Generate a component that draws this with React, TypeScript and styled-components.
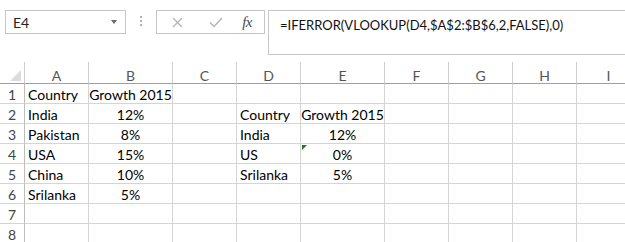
import styled, {createGlobalStyle} from "styled-components";

const COLUMNS = [
  {name: "A", width: 64, align: "left"},
  {name: "B", width: 84, align: "center"},
  {name: "C", width: 64, align: "left"},
  {name: "D", width: 64, align: "left"},
  {name: "E", width: 84, align: "center"},
  {name: "F", width: 64, align: "left"},
  {name: "G", width: 64, align: "left"},
  {name: "H", width: 64, align: "left"},
  {name: "I", width: 64, align: "left"},
];

const ROWS: string[][] = [
  ["Country", "Growth 2015", "", "", ""],
  ["India", "12%", "", "Country", "Growth 2015"],
  ["Pakistan", "8%", "", "India", "12%"],
  ["USA", "15%", "", "US", "0%"],
  ["China", "10%", "", "Srilanka", "5%"],
  ["Srilanka", "5%", "", "", ""],
  [],
  [],
];

const FORMULA = "=IFERROR(VLOOKUP(D4,$A$2:$B$6,2,FALSE),0)";

function App() {
  return (
    <>
      <GlobalStyle/>
      <Frame>
        <Toolbar>
          <NameBox>
            <span>E4</span>
            <DropArrow/>
          </NameBox>
          <Grip>
            <Dot/><Dot/><Dot/>
          </Grip>
          <ButtonGroup>
            <IconButton>
              <svg width="11" height="11" viewBox="0 0 11 11">
                <path d="M1 1 L10 10 M10 1 L1 10" stroke="#b4b4b4" strokeWidth="1.3" fill="none"/>
              </svg>
            </IconButton>
            <IconButton>
              <svg width="14" height="11" viewBox="0 0 14 11">
                <path d="M1 5.5 L5 9.5 L13 1" stroke="#b4b4b4" strokeWidth="1.5" fill="none"/>
              </svg>
            </IconButton>
            <FxLabel>fx</FxLabel>
          </ButtonGroup>
          <FormulaBox>{FORMULA}</FormulaBox>
        </Toolbar>

        <Sheet>
          <CornerCell>
            <CornerMark/>
          </CornerCell>
          {COLUMNS.map(col =>
            <ColumnHeader key={`col-${col.name}`}>{col.name}</ColumnHeader>
          )}
          {ROWS.map((row, rowIndex) => [
            <RowHeader key={`row-${rowIndex}`}>{rowIndex + 1}</RowHeader>,
            ...COLUMNS.map((col, colIndex) =>
              <Cell key={`cell-${rowIndex}-${col.name}`} $align={col.align}>
                {row[colIndex] ?? ""}
                {rowIndex === 3 && col.name === "E" && <ErrorMark/>}
              </Cell>
            ),
          ])}
        </Sheet>
      </Frame>
    </>
  );
}

export default App;

const GlobalStyle = createGlobalStyle`
  body {
    margin: 0;
    background: #ffffff;
    font-family: Lato, "Open Sans", sans-serif;
  }
`;

const Frame = styled.div`
  width: 625px;
  height: 242px;
  overflow: hidden;
  background: #ffffff;
`;

const Toolbar = styled.div`
  display: flex;
  align-items: flex-start;
  height: 62px;
  padding: 10px 0 0 5px;
  box-sizing: border-box;
`;

const NameBox = styled.div`
  display: flex;
  align-items: center;
  justify-content: space-between;
  width: 121px;
  height: 24px;
  padding: 0 8px 0 7px;
  box-sizing: border-box;
  border: 1px solid #c6c6c6;
  font-size: 14px;
  color: #222;
`;

const DropArrow = styled.div`
  width: 0;
  height: 0;
  border-left: 3.5px solid transparent;
  border-right: 3.5px solid transparent;
  border-top: 4px solid #6b6b6b;
`;

const Grip = styled.div`
  display: flex;
  flex-direction: column;
  gap: 2px;
  margin: 6px 14px 0 14px;
`;

const Dot = styled.div`
  width: 2px;
  height: 2px;
  background: #b0b0b0;
`;

const ButtonGroup = styled.div`
  display: flex;
  align-items: center;
  width: 109px;
  height: 24px;
  box-sizing: border-box;
  border: 1px solid #c6c6c6;
  padding: 0 12px 0 10px;
`;

const IconButton = styled.div`
  display: flex;
  align-items: center;
  justify-content: center;
  width: 34px;
  &:first-child {
    width: 20px;
    margin-right: 12px;
  }
`;

const FxLabel = styled.span`
  margin-left: auto;
  font-family: "Liberation Serif", serif;
  font-style: italic;
  font-size: 15px;
  color: #4a4a4a;
  letter-spacing: -0.5px;
`;

const FormulaBox = styled.div`
  flex: 1;
  height: 45px;
  margin: 0 -6px 0 3px;
  padding: 6px 11px;
  box-sizing: border-box;
  border: 1px solid #c6c6c6;
  font-size: 13px;
  color: #111;
  white-space: nowrap;
`;

const Sheet = styled.div`
  display: grid;
  grid-template-columns: 25px ${COLUMNS.map(c => `${c.width}px`).join(" ")};
  grid-template-rows: 22px;
  grid-auto-rows: 20px;
  font-size: 14px;
`;

const CornerCell = styled.div`
  position: relative;
  box-sizing: border-box;
  border-right: 1px solid #d0d0d0;
  border-bottom: 1px solid #9f9f9f;
`;

const CornerMark = styled.div`
  position: absolute;
  right: 3px;
  bottom: 2px;
  width: 0;
  height: 0;
  border-left: 11px solid transparent;
  border-bottom: 11px solid #dcdcdc;
`;

const ColumnHeader = styled.div`
  display: flex;
  align-items: center;
  justify-content: center;
  padding-top: 5px;
  box-sizing: border-box;
  border-right: 1px solid #d0d0d0;
  border-bottom: 1px solid #9f9f9f;
  color: #555;
`;

const RowHeader = styled.div`
  display: flex;
  align-items: center;
  justify-content: center;
  padding-top: 1px;
  box-sizing: border-box;
  border-right: 1px solid #bdbdbd;
  border-bottom: 1px solid #d4d4d4;
  color: #444;
`;

const Cell = styled.div<{$align: string}>`
  position: relative;
  display: flex;
  align-items: center;
  justify-content: ${p => p.$align === "center" ? "center" : "flex-start"};
  padding: 1px 3px 0 3px;
  box-sizing: border-box;
  border-right: 1px solid #d4d4d4;
  border-bottom: 1px solid #d4d4d4;
  color: #000;
  white-space: nowrap;
`;

const ErrorMark = styled.div`
  position: absolute;
  left: 1px;
  top: 1px;
  width: 0;
  height: 0;
  border-top: 5px solid #1e7a1e;
  border-right: 5px solid transparent;
`;
